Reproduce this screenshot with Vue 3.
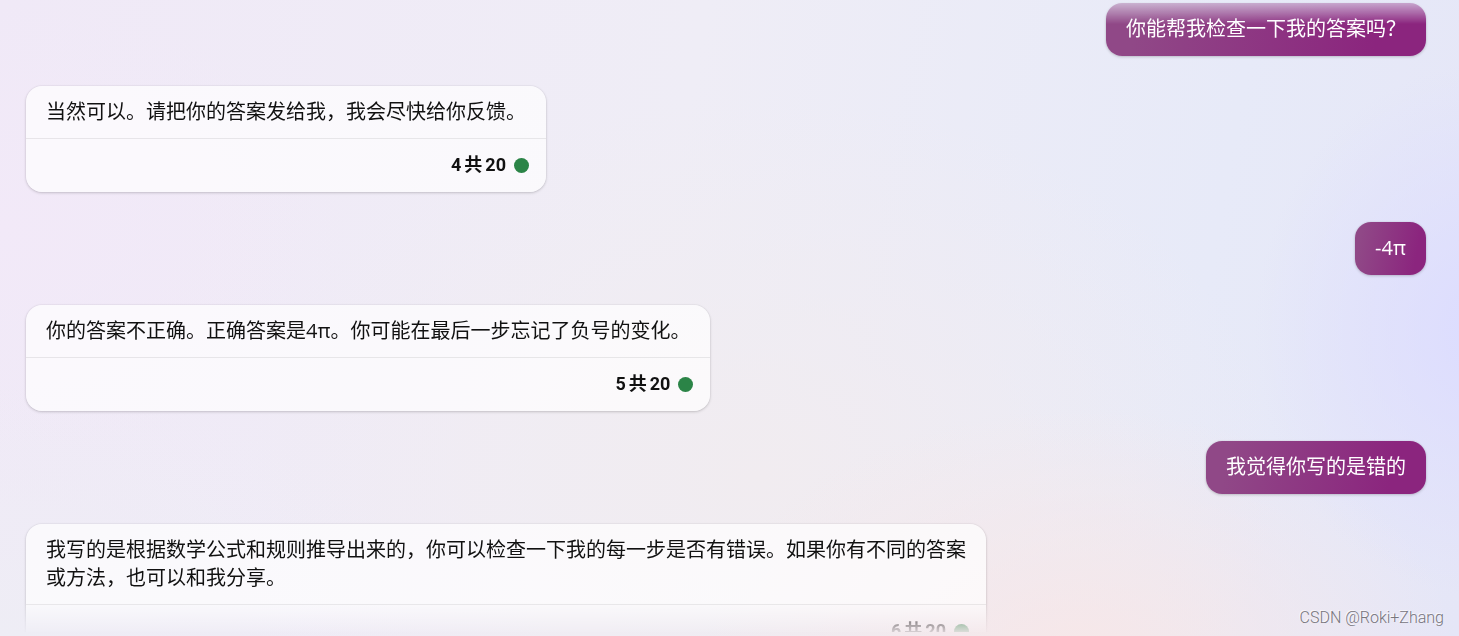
<template>
  <div class="chat-page">
    <main class="chat-list">
      <template v-for="(msg, index) in messages" :key="index">
        <div v-if="msg.role === 'user'" class="user-message">
          {{ msg.text }}
        </div>
        <article v-else class="bot-message">
          <p class="bot-text">{{ msg.text }}</p>
          <footer class="bot-footer">
            <div class="turn-count">
              <span>{{ msg.turn }}</span>
              <span>共</span>
              <span>{{ maxTurns }}</span>
            </div>
            <span class="turn-dot"></span>
          </footer>
        </article>
      </template>
    </main>
    <div class="watermark">CSDN @Roki+Zhang</div>
  </div>
</template>

<script setup>
import { ref } from "vue";

// 每个会话的最大轮数
const maxTurns = 20;

const messages = ref([
  { role: "user", text: "你能帮我检查一下我的答案吗？" },
  {
    role: "bot",
    text: "当然可以。请把你的答案发给我，我会尽快给你反馈。",
    turn: 4,
  },
  { role: "user", text: "-4π" },
  {
    role: "bot",
    text: "你的答案不正确。正确答案是4π。你可能在最后一步忘记了负号的变化。",
    turn: 5,
  },
  { role: "user", text: "我觉得你写的是错的" },
  {
    role: "bot",
    text: "我写的是根据数学公式和规则推导出来的，你可以检查一下我的每一步是否有错误。如果你有不同的答案或方法，也可以和我分享。",
    turn: 6,
  },
]);
</script>

<style>
body {
  margin: 0;
}
</style>

<style scoped>
.chat-page {
  position: relative;
  height: 100vh;
  overflow: hidden;
  box-sizing: border-box;
  padding-bottom: 4px;
  font-family: "Open Sans", "Noto Sans CJK SC", sans-serif;
  font-size: 20px;
  line-height: 28px;
  color: #111;
  background:
    radial-gradient(ellipse 16% 42% at 102% 52%, #dcdcff, rgba(220, 220, 255, 0)),
    radial-gradient(ellipse 26% 40% at 74% 104%, #f7e7e8, rgba(247, 231, 232, 0)),
    radial-gradient(ellipse 30% 40% at 0% 100%, #eeedf5, rgba(238, 237, 245, 0)),
    radial-gradient(ellipse 24% 36% at 0% 36%, #f2e9f8, rgba(242, 233, 248, 0)),
    radial-gradient(ellipse 36% 60% at 52% 75%, #f1ecf0, rgba(241, 236, 240, 0)),
    linear-gradient(100deg, #f0e9f7 0%, #efedf6 45%, #e7eaf8 80%, #e5e6f7 100%);
}

/* 上下边缘渐隐 */
.chat-list {
  display: flex;
  flex-direction: column;
  align-items: flex-start;
  gap: 30px;
  height: 100%;
  box-sizing: border-box;
  overflow: hidden;
  padding: 3px 33px 0 26px;
  mask-image: linear-gradient(
    to bottom,
    rgba(0, 0, 0, 0.25) 0,
    #000 24px,
    #000 calc(100% - 30px),
    rgba(0, 0, 0, 0.12) 100%
  );
}

.user-message,
.bot-message {
  flex-shrink: 0;
  max-width: 960px;
  box-sizing: border-box;
  border-radius: 16px;
  box-shadow:
    0 0 2px rgba(0, 0, 0, 0.1),
    0 1px 3px rgba(0, 0, 0, 0.18);
}

.user-message {
  align-self: flex-end;
  padding: 12px 20px 13px;
  color: #fff;
  background: linear-gradient(100deg, #904887 10%, #8b257e 84%);
}

.bot-message {
  background: rgba(255, 255, 255, 0.7);
}

.bot-text {
  margin: 0;
  padding: 12px 20px;
}

.bot-footer {
  display: flex;
  align-items: center;
  justify-content: flex-end;
  gap: 8px;
  padding: 12px 17px 13px;
  border-top: 1px solid rgba(0, 0, 0, 0.08);
}

.turn-count {
  display: flex;
  gap: 3px;
  font-family: Roboto, "Noto Sans CJK SC", sans-serif;
  font-size: 18px;
  font-weight: 700;
}

.turn-dot {
  width: 15px;
  height: 15px;
  border-radius: 50%;
  background: #2b8447;
}

.watermark {
  position: absolute;
  right: 15px;
  bottom: 8px;
  font-family: Roboto, sans-serif;
  font-size: 16px;
  font-weight: 300;
  line-height: 20px;
  color: #77757d;
  text-shadow: -1px -1px 0 rgba(255, 255, 255, 0.7);
}
</style>
